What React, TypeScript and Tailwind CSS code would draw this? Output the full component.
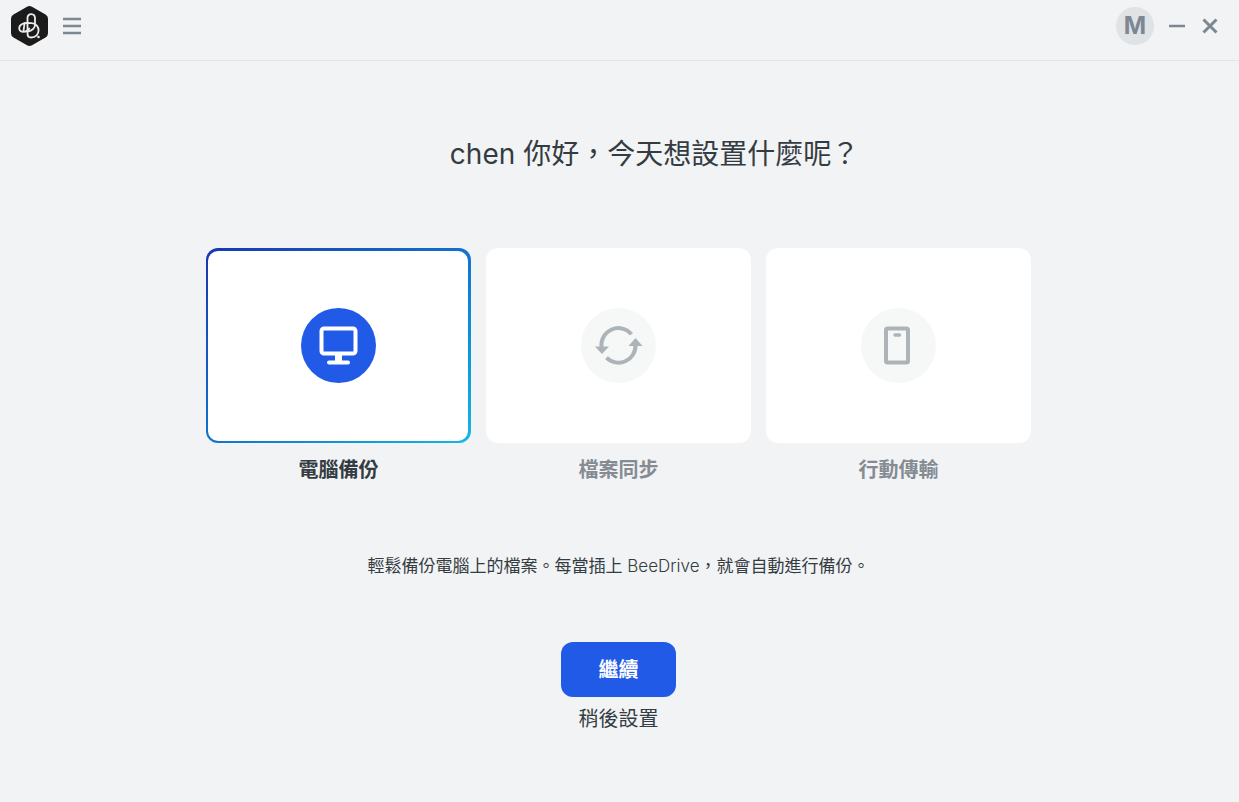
import React from 'react';

type SetupMode = 'backup' | 'sync' | 'transfer';

interface SetupOption {
    id: SetupMode;
    label: string;
    description: React.ReactNode;
    Icon: React.ComponentType;
}

function BeeLogo() {
    return (
        <svg width="37" height="40" viewBox="0 0 37 40" fill="none" aria-hidden="true">
            <path
                d="M16 .8a5 5 0 0 1 5 0L34.500 8.500a5 5 0 0 1 2.500 4.300v14.400a5 5 0 0 1-2.500 4.300L21 39.200a5 5 0 0 1-5 0L2.500 31.500A5 5 0 0 1 0 27.200V12.800A5 5 0 0 1 2.500 8.500Z"
                fill="#1b1b1b"
            />
            <g stroke="#ececec" strokeWidth="1.800" strokeLinecap="round" strokeLinejoin="round">
                <path d="M16.500 17.500V11.800c0-5 7.500-5 7.500.5v6.500c0 3-2.500 6-6.500 6.500" />
                <path d="M18 17.200h2.500c9.500.3 9.500 14.300-.5 14.300-2.500 0-3.500-1.500-3.500-4V17.500" />
                <path d="M18 17.200c-5-.8-9.800 1.300-9.800 5 0 5 8 4.500 10 .3" />
                <path d="M13.500 17.500l-1 7.500" />
            </g>
            <circle cx="27.500" cy="31" r="1.300" fill="#ececec" />
        </svg>
    );
}

function ComputerIcon() {
    return (
        <svg width="75" height="75" viewBox="0 0 75 75" fill="none" aria-hidden="true">
            <rect x="20.500" y="20.500" width="34" height="25" rx="2.500" stroke="currentColor" strokeWidth="4" />
            <path d="M34 46h7v7h-7z" fill="currentColor" />
            <path d="M28 54.500h19" stroke="currentColor" strokeWidth="4" strokeLinecap="round" />
        </svg>
    );
}

function SyncIcon() {
    return (
        <svg width="75" height="75" viewBox="0 0 75 75" fill="none" aria-hidden="true">
            <g stroke="currentColor" strokeWidth="4">
                <path d="M50.500 26.300A17 17 0 0 0 20.500 39" />
                <path d="M25.500 49.700A17 17 0 0 0 54.500 37" />
            </g>
            <path d="M14 38.500h14l-7 7.500zM47.500 38h14l-7-8z" fill="currentColor" />
        </svg>
    );
}

function PhoneIcon() {
    return (
        <svg width="75" height="75" viewBox="0 0 75 75" fill="none" aria-hidden="true">
            <rect x="25" y="20.500" width="22" height="34" rx="1.500" stroke="currentColor" strokeWidth="4" />
            <path d="M34 27h4.500" stroke="currentColor" strokeWidth="3.500" strokeLinecap="round" />
        </svg>
    );
}

const brand = <span className="font-light">BeeDrive</span>;

const OPTIONS: SetupOption[] = [
    {
        id: 'backup',
        label: '電腦備份',
        description: <>輕鬆備份電腦上的檔案。每當插上 {brand}，就會自動進行備份。</>,
        Icon: ComputerIcon,
    },
    {
        id: 'sync',
        label: '檔案同步',
        description: <>在電腦與 {brand} 之間同步檔案。</>,
        Icon: SyncIcon,
    },
    {
        id: 'transfer',
        label: '行動傳輸',
        description: <>將行動裝置上的照片與影片傳輸至 {brand}。</>,
        Icon: PhoneIcon,
    },
];

function TitleBar() {
    return (
        <header className="flex h-[61px] items-start justify-between border-b border-[#e2e5e8] pt-1.5 pr-5 pl-[11px] text-[#7d8791]">
            <div className="flex h-10 items-center gap-[14px]">
                <BeeLogo />
                <button type="button" aria-label="選單" className="cursor-pointer">
                    <svg width="20" height="18" viewBox="0 0 20 18" stroke="currentColor" strokeWidth="2.500">
                        <path d="M1 2h18M1 9h18M1 16h18" />
                    </svg>
                </button>
            </div>
            <div className="flex h-10 items-center">
                <button
                    type="button"
                    aria-label="帳號"
                    className="flex size-[38px] cursor-pointer items-center justify-center rounded-full bg-[#dfe3e6] text-[24px] leading-none font-bold"
                >
                    M
                </button>
                <button type="button" aria-label="最小化" className="ml-[14px] cursor-pointer">
                    <svg width="18" height="18" viewBox="0 0 18 18" stroke="currentColor" strokeWidth="2.500">
                        <path d="M1 9h16" />
                    </svg>
                </button>
                <button type="button" aria-label="關閉" className="ml-[15px] cursor-pointer">
                    <svg width="18" height="18" viewBox="0 0 18 18" stroke="currentColor" strokeWidth="3">
                        <path d="M2.500 2.500l13 13M15.500 2.500l-13 13" />
                    </svg>
                </button>
            </div>
        </header>
    );
}

interface OptionCardProps {
    option: SetupOption;
    selected: boolean;
    onSelect: (id: SetupMode) => void;
}

function OptionCard({ option, selected, onSelect }: OptionCardProps) {
    const { id, label, Icon } = option;

    return (
        <label className="w-[265px] cursor-pointer text-center">
            <input
                type="radio"
                name="setup-mode"
                value={id}
                checked={selected}
                onChange={() => onSelect(id)}
                className="sr-only"
            />
            <span
                className={`block h-[195px] rounded-xl pt-[3px] pr-[3px] pb-[2px] pl-[2px] ${
                    selected ? 'bg-linear-to-br from-[#1a35b0] via-[#1272cc] to-[#14b8e4]' : 'bg-white'
                }`}
            >
                <span className="flex h-full items-center justify-center rounded-[10px] bg-white pb-px">
                    <span
                        className={`size-[75px] rounded-full ${
                            selected ? 'bg-[#225ae8] text-white' : 'bg-[#f6f8f8] text-[#acb4ba]'
                        }`}
                    >
                        <Icon />
                    </span>
                </span>
            </span>
            <span
                className={`mt-3 block text-[20px] leading-[30px] font-bold ${
                    selected ? 'text-[#343c42]' : 'text-[#858b92]'
                }`}
            >
                {label}
            </span>
        </label>
    );
}

export default function App() {
    const [mode, setMode] = React.useState<SetupMode>('backup');
    const current = OPTIONS.find(option => option.id === mode) ?? OPTIONS[0];

    return (
        <div className="min-h-screen bg-[#f1f3f5] font-[Inter,'Noto_Sans_CJK_TC',sans-serif] text-[#343c42]">
            <TitleBar />
            <main className="flex flex-col items-center pt-[73px] pr-[26px] pb-16 pl-6">
                <h1 className="pl-[72px] text-[28px] leading-10">chen 你好，今天想設置什麼呢？</h1>

                <div role="radiogroup" aria-label="設置項目" className="mt-[74px] flex flex-wrap justify-center gap-[15px]">
                    {OPTIONS.map(option => (
                        <OptionCard
                            key={option.id}
                            option={option}
                            selected={option.id === mode}
                            onSelect={setMode}
                        />
                    ))}
                </div>

                <p className="mt-[69px] text-[17px] leading-6">{current.description}</p>

                <button
                    type="button"
                    className="mt-16 h-[55px] w-[115px] cursor-pointer rounded-xl bg-[#225ae8] text-[20px] font-bold text-white"
                >
                    繼續
                </button>
                <button type="button" className="mt-[7px] cursor-pointer text-[20px] leading-[30px]">
                    稍後設置
                </button>
            </main>
        </div>
    );
}
